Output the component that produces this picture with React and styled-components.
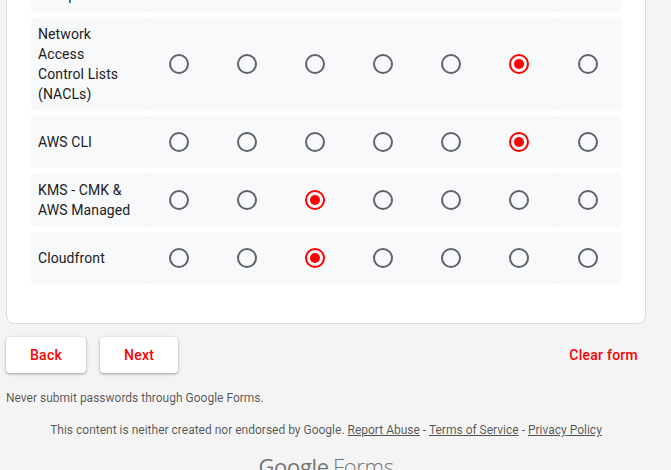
import React from 'react';
import styled, {createGlobalStyle} from 'styled-components';

const GlobalStyle = createGlobalStyle`
    html, body {
        margin: 0;
        padding: 0;
        background: #f4f4f4;
        overflow: hidden;
    }
    body {
        font-family: Roboto, "Liberation Sans", Arial, sans-serif;
    }
`

const Page = styled.div`
    width: 640px;
    margin: -67px 0 0 6px;
`

const Card = styled.section`
    background: #fff;
    border: 1px solid #dadce0;
    border-radius: 8px;
    padding: 24px 23px 39px 24px;
    display: flex;
    flex-direction: column;
    gap: 5px;
`

const Row = styled.div`
    display: flex;
    align-items: stretch;
    min-height: 52px;
    background: #f8f9fa;
    border-radius: 4px;
`

const Label = styled.div`
    width: 114px;
    flex-shrink: 0;
    box-sizing: border-box;
    padding: 7px 2px 7px 7px;
    display: flex;
    align-items: center;
    font-size: 14px;
    line-height: 20px;
    color: #202124;
    letter-spacing: 0.1px;
    white-space: nowrap;
    border-right: 1px solid rgba(0, 0, 0, 0.012);
`

const Cell = styled.div`
    flex: 1;
    display: flex;
    align-items: center;
    justify-content: center;
    ${props => props.last && 'border-left: 1px solid rgba(0, 0, 0, 0.012);'}
`

const Radio = styled.span`
    width: 20px;
    height: 20px;
    box-sizing: border-box;
    border-radius: 50%;
    border: 2px solid ${props => props.checked ? '#ff0000' : '#5f6368'};
    display: flex;
    align-items: center;
    justify-content: center;

    &::after {
        content: '';
        width: 10px;
        height: 10px;
        border-radius: 50%;
        background: #ff0000;
        display: ${props => props.checked ? 'block' : 'none'};
    }
`

const Actions = styled.div`
    display: flex;
    align-items: center;
    gap: 14px;
    margin-top: 13px;
`

const Button = styled.button`
    height: 36px;
    padding: 0 24px;
    border: none;
    border-radius: 4px;
    background: #fff;
    box-shadow: 0 1px 2px rgba(60, 64, 67, 0.3), 0 1px 3px 1px rgba(60, 64, 67, 0.15);
    font-family: Roboto, "Liberation Sans", Arial, sans-serif;
    font-size: 14px;
    font-weight: 500;
    letter-spacing: 0.25px;
    color: #ff0000;
`

const ClearButton = styled.button`
    margin-left: auto;
    height: 36px;
    padding: 0 8px;
    border: none;
    background: transparent;
    font-family: Roboto, "Liberation Sans", Arial, sans-serif;
    font-size: 14px;
    font-weight: 500;
    letter-spacing: 0.25px;
    color: #ff0000;
`

const Notice = styled.p`
    margin: 17px 0 0;
    font-size: 12px;
    line-height: 16px;
    color: rgba(0, 0, 0, 0.66);
`

const Footer = styled.p`
    margin: 16px 0 0;
    text-align: center;
    font-size: 12px;
    line-height: 16px;
    color: rgba(0, 0, 0, 0.66);

    a {
        color: inherit;
        text-decoration: underline;
    }
`

const Logo = styled.div`
    margin-top: 14px;
    text-align: center;
    font-family: "Open Sans", Roboto, sans-serif;
    font-size: 22px;
    line-height: 28px;
    color: #757575;
    letter-spacing: -0.3px;

    span {
        margin-left: 4px;
        font-weight: 300;
    }
`

const rows = [
    {lines: ['Security', 'Groups'], picked: 5},
    {lines: ['Network', 'Access', 'Control Lists', '(NACLs)'], picked: 5},
    {lines: ['AWS CLI'], picked: 5},
    {lines: ['KMS - CMK &', 'AWS Managed'], picked: 2},
    {lines: ['Cloudfront'], picked: 2},
]

const columns = [0, 1, 2, 3, 4, 5, 6]

const App = () => {
    return (
        <>
            <GlobalStyle />
            <Page>
                <Card>
                    {rows.map(row => (
                        <Row key={row.lines.join(' ')}>
                            <Label>
                                <div>
                                    {row.lines.map((line, i) => (
                                        <React.Fragment key={line}>
                                            {i > 0 && <br />}
                                            {line}
                                        </React.Fragment>
                                    ))}
                                </div>
                            </Label>
                            {columns.map(col => (
                                <Cell key={col} last={col === 6}>
                                    <Radio checked={row.picked === col} />
                                </Cell>
                            ))}
                        </Row>
                    ))}
                </Card>
                <Actions>
                    <Button>Back</Button>
                    <Button>Next</Button>
                    <ClearButton>Clear form</ClearButton>
                </Actions>
                <Notice>Never submit passwords through Google Forms.</Notice>
                <Footer>
                    This content is neither created nor endorsed by Google. <a>Report Abuse</a> - <a>Terms of Service</a> - <a>Privacy Policy</a>
                </Footer>
                <Logo>Google<span>Forms</span></Logo>
            </Page>
        </>
    )
}

export default App;
